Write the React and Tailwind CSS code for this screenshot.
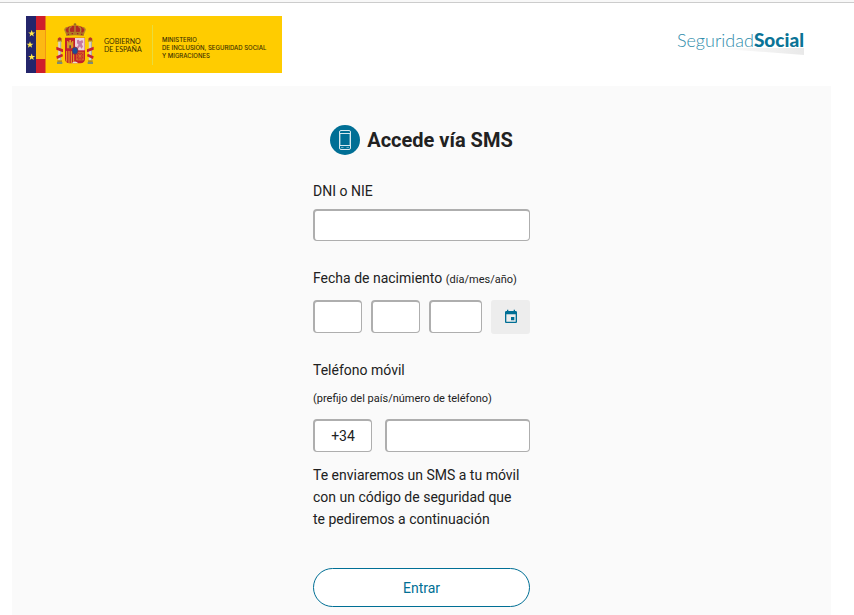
import React, { useState } from 'react';

const inputClass =
  'min-w-0 bg-white border border-t-2 border-l-2 border-[#aeaeae] rounded-[4px] text-center text-[14px] text-[#212121] focus:outline-none focus:border-[#006f95]';

function Star({ x, y }) {
  return (
    <polygon
      transform={`translate(${x} ${y})`}
      points="0,-3.6 0.9,-1.1 3.5,-1 1.4,0.5 2.1,3 0,1.5 -2.1,3 -1.4,0.5 -3.5,-1 -0.9,-1.1"
      fill="#ffe94a"
    />
  );
}

function Flags() {
  return (
    <svg viewBox="0 0 20 57" className="w-5 h-[57px] shrink-0" aria-hidden="true">
      <rect width="10" height="57" fill="#24256b" />
      <rect x="10" width="9.5" height="57" fill="#cf1f2b" />
      <rect x="10" y="14" width="9.5" height="29" fill="#fdb813" />
      <Star x={5.7} y={17.5} />
      <Star x={4} y={28.8} />
      <Star x={5.7} y={41} />
    </svg>
  );
}

function Column() {
  return (
    <g>
      <path d="M-6 5 Q0 -4 6 5 L5 11 H-5 Z" fill="#b5342c" />
      <rect x="-7" y="10" width="14" height="4" fill="#a8802a" />
      <rect x="-4.5" y="14" width="9" height="56" fill="#d9d3c2" />
      <rect x="2" y="14" width="2.5" height="56" fill="#a9a596" />
      <rect x="-7" y="70" width="14" height="5" fill="#b38a1e" />
      <rect x="-8" y="75" width="16" height="6" fill="#7d8c74" />
    </g>
  );
}

function CoatOfArms() {
  return (
    <svg viewBox="18 12 120 129" className="w-10 h-[43px] shrink-0" role="img" aria-label="Escudo de España">
      {/* pillars with ribbons */}
      <g transform="translate(32 54)"><Column /></g>
      <g transform="translate(124 54)"><Column /></g>
      <path d="M22 83 L42 91 L42 100 L22 92 Z M40 104 L22 112 L24 120 L42 112 Z" fill="#c8202f" />
      <path d="M134 83 L114 91 L114 100 L134 92 Z M116 104 L134 112 L132 120 L114 112 Z" fill="#c8202f" />

      {/* crown */}
      <path d="M52 42 Q40 27 56 24 Q68 18 78 20 Q88 18 100 24 Q116 27 104 42 Z" fill="#b02a24" />
      <path d="M52 42 Q42 28 56 25 M63 41 Q56 27 68 22 M78 41 V20 M93 41 Q100 27 88 22 M104 42 Q114 28 100 25" fill="none" stroke="#b58a2c" strokeWidth="4" />
      <path d="M78 12 V22 M74 16 H82" stroke="#8c6a22" strokeWidth="3" />
      <path d="M50 41 Q78 35 106 41 L104 51 Q78 46 52 51 Z" fill="#b07a23" />
      <path d="M56 46 H60 M68 44 H72 M84 44 H88 M96 46 H100" stroke="#a11f2a" strokeWidth="4" />

      {/* shield */}
      <path d="M48 56 H108 V120 Q108 132 94 133 H62 Q48 132 48 120 Z" fill="#c41f2c" />
      <path d="M78 57 H107 V94 H78 Z" fill="#ecd3dc" />
      <path d="M84 64 L89 62 L92 67 L100 63 L103 70 L98 74 L102 83 L97 89 L93 82 L87 89 L84 85 L89 77 L84 73 Z" fill="#c578a0" />
      <path d="M54 66 H58 V70 H61 V63 H66 V70 H69 V66 H73 V88 H54 Z" fill="#d99a25" />
      <rect x="61" y="79" width="5" height="9" fill="#5b3560" />
      <path d="M53 96 V128 M60 96 V132 M67 96 V132 M74 96 V132" stroke="#e6a91e" strokeWidth="3" />
      <path d="M83 100 H103 V123 H83 Z M83 100 L103 123 M103 100 L83 123 M93 100 V123 M83 111 H103" fill="none" stroke="#dc8526" strokeWidth="2" />
      <path d="M68 133 Q78 122 88 133 Z" fill="#e8ddd0" />
      <ellipse cx="78" cy="95" rx="9" ry="11" fill="#1e4c94" stroke="#a3262f" strokeWidth="2" />
    </svg>
  );
}

function GovernmentBanner() {
  return (
    <div className="flex items-center h-[57px] w-[256px] bg-[#ffcc00] font-['Lato',sans-serif] text-[#3a2f00] leading-[8px]">
      <Flags />
      <div className="flex items-center pl-[9px]">
        <CoatOfArms />
        <p className="pl-[9px] w-[57px] text-[7px] whitespace-nowrap">
          GOBIERNO<br />DE ESPAÑA
        </p>
      </div>
      <p className="flex items-center h-10 border-l border-[#e9dc3c] pl-[9px] font-['Inter',sans-serif] text-[6px] font-medium whitespace-nowrap">
        <span className="pt-1.5">MINISTERIO<br />DE INCLUSIÓN, SEGURIDAD SOCIAL<br />Y MIGRACIONES</span>
      </p>
    </div>
  );
}

function SocialSecurityLogo() {
  return (
    <div className="relative font-['Lato',sans-serif] text-[18px] leading-6 text-[#2f8cab]">
      <svg viewBox="0 0 94 8" className="absolute right-0 top-5 w-[94px] h-2" aria-hidden="true">
        <defs>
          <linearGradient id="swoosh">
            <stop offset="0" stopColor="#ffffff" />
            <stop offset="1" stopColor="#e9e9e9" />
          </linearGradient>
        </defs>
        <path d="M0 0 H94 V7 Z" fill="url(#swoosh)" />
      </svg>
      <span className="relative font-light">Seguridad</span>
      <span className="relative text-[19px] font-black text-[#0a7396]">Social</span>
    </div>
  );
}

function PhoneIcon() {
  return (
    <svg viewBox="0 0 30 30" className="w-[30px] h-[30px] shrink-0" aria-hidden="true">
      <circle cx="15" cy="15" r="15" fill="#006f95" />
      <g fill="none" stroke="#d8eaf0">
        <rect x="9.5" y="5.5" width="11" height="19" rx="1.5" />
        <path d="M10 8.5 H20 M10 20.5 H20" />
        <path d="M10.5 9 V20 M19.5 9 V20" strokeOpacity="0.4" />
        <path d="M11 22.5 H13.5 M16.5 22.5 H19" strokeOpacity="0.5" />
      </g>
    </svg>
  );
}

function CalendarIcon() {
  return (
    <svg viewBox="0 0 24 24" className="w-4 h-4" fill="#006f95" aria-hidden="true">
      <path d="M17 12h-5v5h5v-5zM16 1v2H8V1H6v2H5c-1.11 0-2 .9-2 2v14c0 1.1.89 2 2 2h14c1.1 0 2-.9 2-2V5c0-1.1-.9-2-2-2h-1V1h-2zm3 18H5V8h14v11z" />
    </svg>
  );
}

export default function App() {
  const [dni, setDni] = useState('');
  const [birth, setBirth] = useState({ day: '', month: '', year: '' });
  const [prefix, setPrefix] = useState('+34');
  const [phone, setPhone] = useState('');

  const handleSubmit = (e) => {
    e.preventDefault();
  };

  return (
    <div className="min-h-screen flex flex-col bg-white font-['Roboto',sans-serif] text-[14px] leading-5 text-[#212121]">
      <div className="h-[3px] bg-[#f8f8f8] border-b border-[#cccccc]"></div>
      <header className="flex justify-between items-start pl-[26px] pr-[50px] py-[13px]">
        <GovernmentBanner />
        <div className="pt-3">
          <SocialSecurityLogo />
        </div>
      </header>

      <main className="grow ml-3 mr-[23px] bg-[#fafafa] flex flex-col items-center pt-[39px] pb-2">
        <h1 className="flex items-center gap-[7px] text-[20px] leading-[30px] font-bold">
          <PhoneIcon />
          Accede vía SMS
        </h1>

        <form onSubmit={handleSubmit} className="w-[217px] flex flex-col pt-[26px]">
          <label htmlFor="dni">DNI o NIE</label>
          <input
            id="dni"
            type="text"
            value={dni}
            onChange={(e) => setDni(e.target.value)}
            className={`${inputClass} mt-2 h-8`}
          />

          <fieldset className="mt-[27px]">
            <legend className="whitespace-nowrap">
              Fecha de nacimiento <span className="text-[11px]">(día/mes/año)</span>
            </legend>
            <div className="mt-2.5 flex gap-[9px]">
              <input
                type="text"
                aria-label="Día"
                value={birth.day}
                onChange={(e) => setBirth({ ...birth, day: e.target.value })}
                className={`${inputClass} w-[49px] h-[33px]`}
              />
              <input
                type="text"
                aria-label="Mes"
                value={birth.month}
                onChange={(e) => setBirth({ ...birth, month: e.target.value })}
                className={`${inputClass} w-[49px] h-[33px]`}
              />
              <input
                type="text"
                aria-label="Año"
                value={birth.year}
                onChange={(e) => setBirth({ ...birth, year: e.target.value })}
                className={`${inputClass} w-[53px] h-[33px]`}
              />
              <button
                type="button"
                aria-label="Abrir calendario"
                className="grow h-[34px] flex items-center justify-center rounded-[3px] bg-[#ededed]"
              >
                <CalendarIcon />
              </button>
            </div>
          </fieldset>

          <label htmlFor="phone" className="mt-[26px]">
            Teléfono móvil
            <span className="block mt-[9px] text-[11px]">(prefijo del país/número de teléfono)</span>
          </label>
          <div className="mt-2.5 flex gap-[13px]">
            <input
              type="text"
              aria-label="Prefijo del país"
              value={prefix}
              onChange={(e) => setPrefix(e.target.value)}
              className={`${inputClass} w-[59px] shrink-0 h-[33px]`}
            />
            <input
              id="phone"
              type="tel"
              value={phone}
              onChange={(e) => setPhone(e.target.value)}
              className={`${inputClass} grow h-[33px]`}
            />
          </div>

          <p className="mt-3 pr-1 leading-[22px]">
            Te enviaremos un SMS a tu móvil con un código de seguridad que te pediremos a continuación
          </p>

          <button
            type="submit"
            className="mt-[38px] h-[39px] rounded-full border border-[#006f95] bg-white text-[#006f95] hover:bg-[#f0f8fb]"
          >
            Entrar
          </button>
        </form>
      </main>
    </div>
  );
}
